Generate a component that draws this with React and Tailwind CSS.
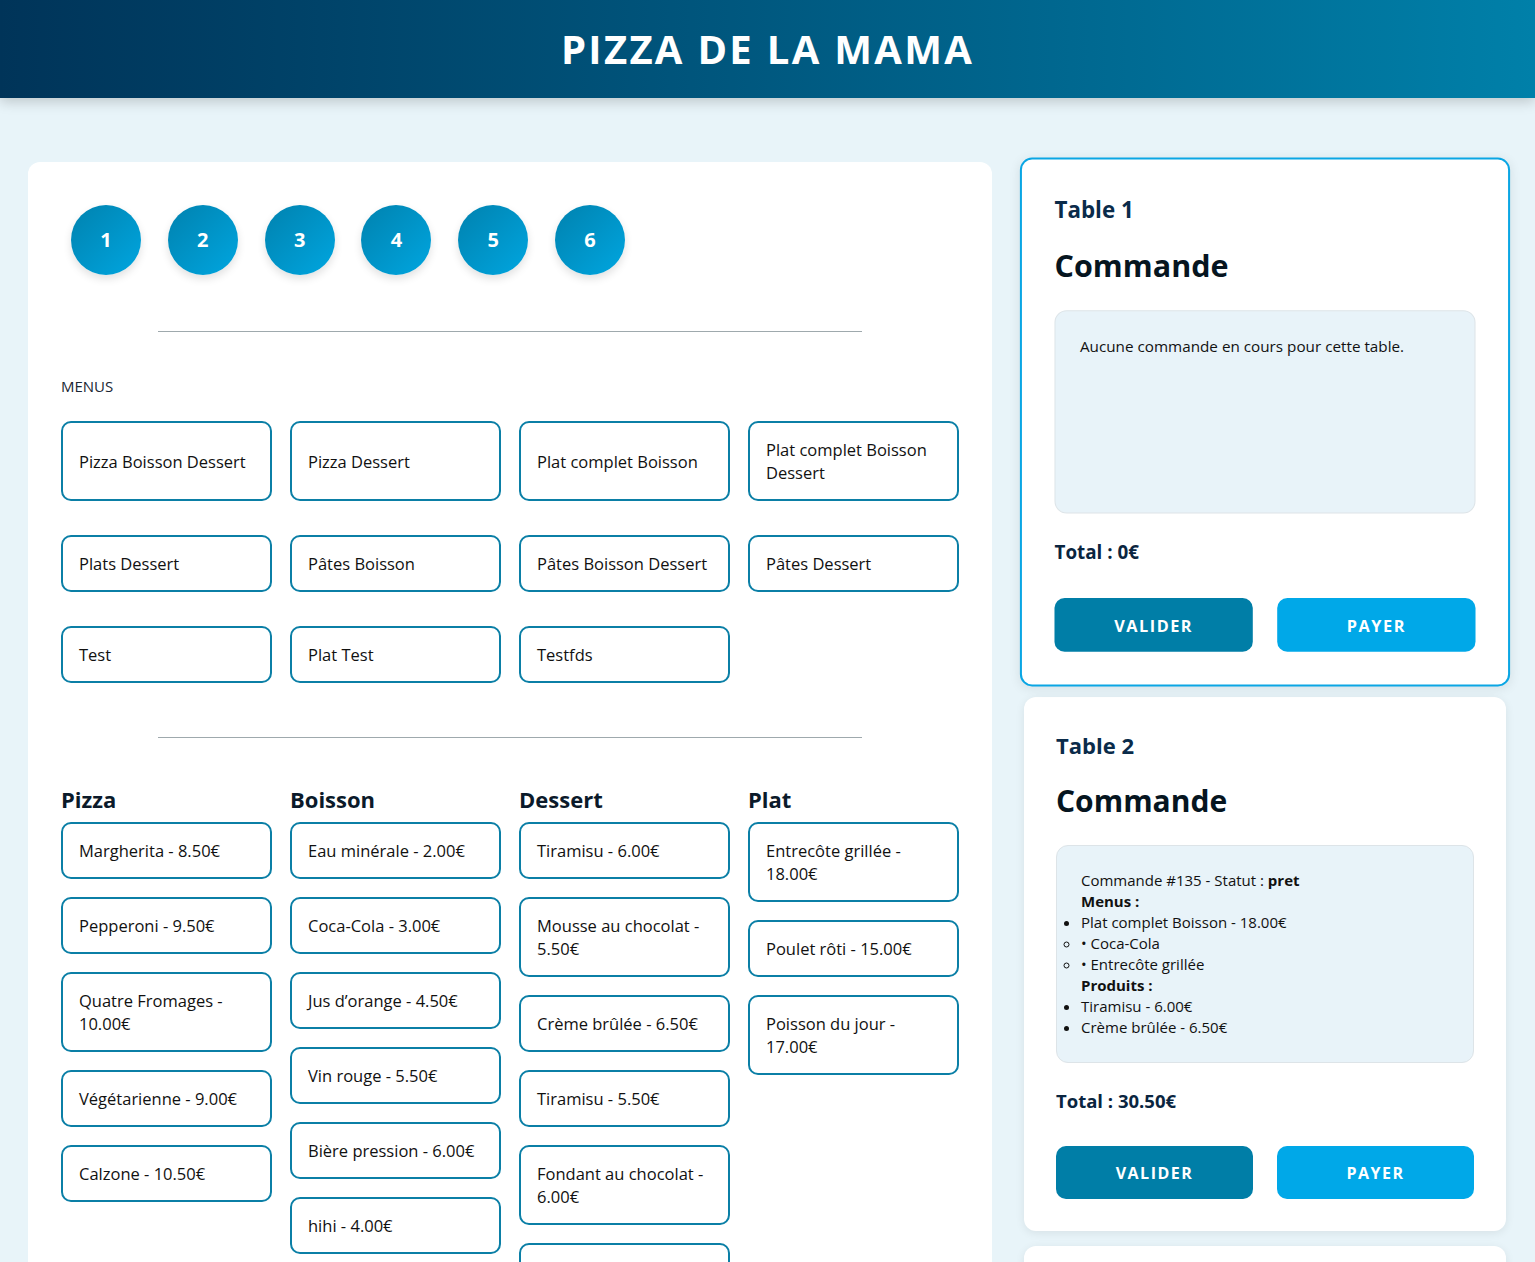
import React from 'react';

const FONT = "font-['Open_Sans','Noto_Sans',sans-serif]";

const MENUS = [
  'Pizza Boisson Dessert',
  'Pizza Dessert',
  'Plat complet Boisson',
  'Plat complet Boisson Dessert',
  'Plats Dessert',
  'Pâtes Boisson',
  'Pâtes Boisson Dessert',
  'Pâtes Dessert',
  'Test',
  'Plat Test',
  'Testfds',
];

const CATEGORIES = [
  {
    name: 'Pizza',
    items: ['Margherita - 8.50€', 'Pepperoni - 9.50€', 'Quatre Fromages - 10.00€', 'Végétarienne - 9.00€', 'Calzone - 10.50€'],
  },
  {
    name: 'Boisson',
    items: ['Eau minérale - 2.00€', 'Coca-Cola - 3.00€', 'Jus d’orange - 4.50€', 'Vin rouge - 5.50€', 'Bière pression - 6.00€', 'hihi - 4.00€'],
  },
  {
    name: 'Dessert',
    items: ['Tiramisu - 6.00€', 'Mousse au chocolat - 5.50€', 'Crème brûlée - 6.50€', 'Tiramisu - 5.50€', 'Fondant au chocolat - 6.00€', 'Panna cotta - 5.00€'],
  },
  {
    name: 'Plat',
    items: ['Entrecôte grillée - 18.00€', 'Poulet rôti - 15.00€', 'Poisson du jour - 17.00€'],
  },
];

const ItemButton = ({ label }) => (
  <button className="flex items-center text-left w-full rounded-[10px] border-2 border-[#0b7fa6] bg-white px-[16px] py-[15px] text-[16.5px] leading-[23px] text-[#111]">
    {label}
  </button>
);

const Separator = ({ className }) => (
  <div className={`mx-auto h-px w-[704px] bg-[#9fa9ad] ${className}`} />
);

const TableCard = ({ number, selected, total, children, minBox }) => (
  <div
    className={`rounded-xl bg-white p-8 shadow-[0_2px_10px_rgba(0,0,0,0.08)] ${
      selected ? 'relative z-10 scale-[1.017] border-2 border-[#0aa6e4]' : ''
    }`}
  >
    <h3 className="text-[22px] font-bold leading-[32px] text-[#0a2b4a]">Table {number}</h3>
    <h2 className="mt-5 text-[30px] font-bold leading-[40px] text-[#06151f]">Commande</h2>
    <div
      className={`mt-6 rounded-xl border border-[#dde4e8] bg-[#e8f3f9] p-6 text-[15px] leading-[21px] text-[#111] ${
        minBox ? 'min-h-[200px]' : ''
      }`}
    >
      {children}
    </div>
    <p className="mt-[25px] text-[18.5px] font-bold leading-[26px] text-[#0a2540]">Total : {total}</p>
    <div className="mt-8 grid grid-cols-2 gap-6">
      <button className="h-[53px] rounded-[10px] bg-[#007ea7] text-[16px] font-bold tracking-[1.5px] text-white">
        VALIDER
      </button>
      <button className="h-[53px] rounded-[10px] bg-[#00a8e8] text-[16px] font-bold tracking-[1.5px] text-white">
        PAYER
      </button>
    </div>
  </div>
);

export default function App() {
  return (
    <div className={`min-h-screen bg-[#e8f4f9] ${FONT}`}>
      {/* Header */}
      <header className="relative z-20 flex h-[98px] items-center justify-center bg-gradient-to-r from-[#003459] to-[#0080a9] shadow-[0_4px_12px_rgba(0,0,0,0.18)]">
        <h1 className="text-[40px] font-bold tracking-[2.3px] text-white">PIZZA DE LA MAMA</h1>
      </header>

      <main className="grid grid-cols-[964px_482px] gap-8 px-7 pt-16">
        {/* Left panel */}
        <section className="rounded-xl bg-white px-[33px] pt-[33px] pb-10">
          <div className="flex gap-[26.8px] p-[10px]">
            {[1, 2, 3, 4, 5, 6].map((n) => (
              <button
                key={n}
                className="flex h-[70px] w-[70px] items-center justify-center rounded-full bg-gradient-to-br from-[#0082af] to-[#00a6e0] text-[20px] font-bold text-white shadow-[0_4px_8px_rgba(0,0,0,0.12)]"
              >
                {n}
              </button>
            ))}
          </div>

          <Separator className="mt-[46px]" />

          <p className="mt-[44px] text-[15px] leading-[20px] text-[#1a2633]">MENUS</p>

          <div className="mt-[25px] grid grid-cols-4 gap-x-[18px] gap-y-[34px]">
            {MENUS.map((m) => (
              <ItemButton key={m} label={m} />
            ))}
          </div>

          <Separator className="mt-[54px]" />

          <div className="mt-[47px] grid grid-cols-4 items-start gap-x-[18px]">
            {CATEGORIES.map((cat) => (
              <div key={cat.name}>
                <h3 className="mb-[9px] text-[22px] font-bold leading-[28px] text-[#0b1a2a]">{cat.name}</h3>
                <div className="flex flex-col gap-[18px]">
                  {cat.items.map((it, i) => (
                    <ItemButton key={i} label={it} />
                  ))}
                </div>
              </div>
            ))}
          </div>
        </section>

        {/* Right column */}
        <aside className="flex flex-col gap-[15px]">
          <TableCard number={1} selected total="0€" minBox>
            <p>Aucune commande en cours pour cette table.</p>
          </TableCard>

          <TableCard number={2} total="30.50€">
            <p>
              Commande #135 - Statut : <strong>pret</strong>
            </p>
            <p className="font-bold">Menus :</p>
            <ul className="list-disc">
              <li>
                Plat complet Boisson - 18.00€
                <ul className="list-[circle]">
                  <li>• Coca-Cola</li>
                  <li>• Entrecôte grillée</li>
                </ul>
              </li>
            </ul>
            <p className="font-bold">Produits :</p>
            <ul className="list-disc">
              <li>Tiramisu - 6.00€</li>
              <li>Crème brûlée - 6.50€</li>
            </ul>
          </TableCard>

          <TableCard number={3} total="0€" minBox>
            <p>Aucune commande en cours pour cette table.</p>
          </TableCard>
        </aside>
      </main>
    </div>
  );
}
